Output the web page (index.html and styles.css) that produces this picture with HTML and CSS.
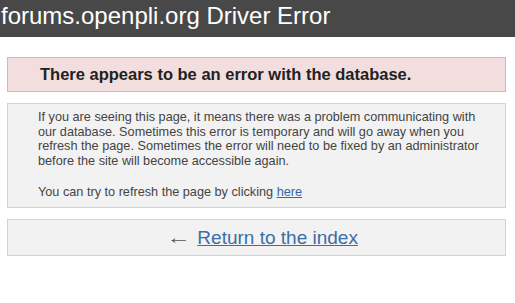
FILE: index.html
```html
<!DOCTYPE html>
<html lang="en">
<head>
    <meta charset="UTF-8">
    <title>forums.openpli.org Driver Error</title>
    <link rel="stylesheet" href="styles.css">
</head>
<body>
    <div id="header">forums.openpli.org Driver Error</div>

    <div class="message error">
        <h1>There appears to be an error with the database.</h1>
    </div>

    <div class="message">
        <p>If you are seeing this page, it means there was a problem communicating with our database. Sometimes this error is temporary and will go away when you refresh the page. Sometimes the error will need to be fixed by an administrator before the site will become accessible again.</p>
        <p>You can try to refresh the page by clicking <a href="#">here</a></p>
    </div>

    <div class="message back">
        <span class="arrow">&larr;</span> <a href="#">Return to the index</a>
    </div>
</body>
</html>
```

FILE: styles.css
```css
body {
    margin: 0;
    font-family: "Liberation Sans", Arial, sans-serif;
    background-color: #fff;
    color: #444;
}

#header {
    background-color: #484848;
    color: #fff;
    font-size: 24px;
    height: 37px;
    line-height: 32px;
    padding-left: 1px;
}

.message {
    margin: 11px 9px 0 7px;
    padding: 0 16px 0 30px;
    background-color: #f2f2f2;
    border: 1px solid #d3d3d3;
}

.message p {
    font-size: 12.7px;
    line-height: 14.7px;
    margin: 6px 0 7px;
}

.message p + p {
    margin-top: 16px;
}

.message a {
    color: #3366aa;
}

.error {
    margin-top: 20px;
    background-color: #f2dede;
    border-color: #deb3b3;
    padding: 0 32px;
}

.error h1 {
    font-size: 16.5px;
    color: #222;
    margin: 0;
    line-height: 33px;
}

.message.back {
    text-align: center;
    font-size: 19px;
    line-height: 35px;
}

.back .arrow {
    display: inline-block;
    color: #555;
    transform: scaleX(1.3);
    margin-right: 4px;
}

.back a {
    color: #3a6ea5;
}
```
